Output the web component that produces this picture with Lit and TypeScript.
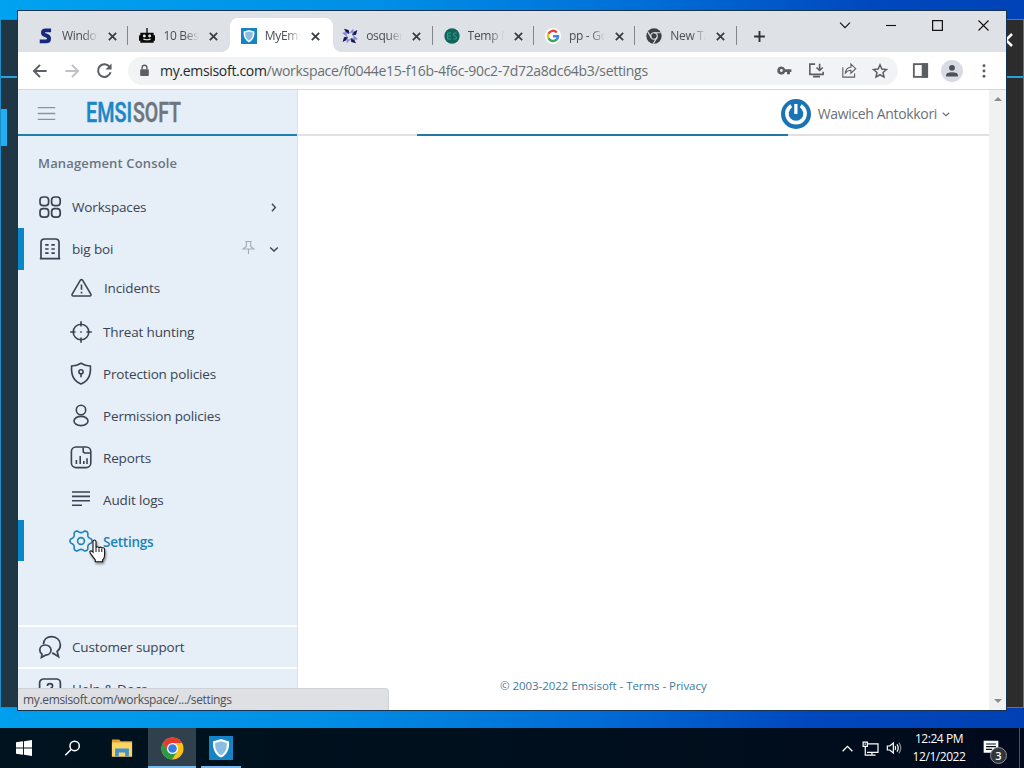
import { LitElement, html, svg, css } from "lit";
import { customElement, property } from "lit/decorators.js";

const gearOutline = () => {
  const pts: string[] = [];
  for (let d = 0; d < 360; d += 4) {
    const t = (d * Math.PI) / 180;
    const c = Math.cos(6 * t);
    const r = 9.7 + 1.35 * Math.sign(c) * Math.pow(Math.abs(c), 0.75);
    pts.push(`${(12 + r * Math.cos(t)).toFixed(2)} ${(12 + r * Math.sin(t)).toFixed(2)}`);
  }
  return `M${pts.join("L")}Z`;
};

const glyphs: Record<string, unknown> = {
  grid: svg`<rect x="2" y="2" width="8.6" height="8.6" rx="3.2"/><rect x="13.6" y="2" width="8.6" height="8.6" rx="3.2"/><rect x="2" y="13.6" width="8.6" height="8.6" rx="3.2"/><rect x="13.6" y="13.6" width="8.6" height="8.6" rx="3.2"/>`,
  building: svg`<path d="M3 21.6V5.6Q3 2 6.6 2h10.8Q21 2 21 5.6v16M1.8 21.7h20.4M7.2 7.8h3.4M13.4 7.8h3.4M7.2 12h3.4M13.4 12h3.4M7.2 16.2h3.4M13.4 16.2h3.4"/>`,
  warning: svg`<path d="M11.4 4.2Q12.500 2.7 13.6 4.2L21.800 18Q22.500 20 20.8 20H4.200Q2.500 20 3.200 18ZM12.500 8.6v5.2M12.500 15.8v1.6"/>`,
  target: svg`<circle cx="12" cy="12" r="7.8"/><path d="M12 1.2v5.4M12 17.4v5.4M1.2 12h5.4M17.4 12h5.4M11.2 12h1.6"/>`,
  shield: svg`<path d="M12 1.3Q16.5 4.1 21.4 4C22 12.500 20 19.1 12 21.9C4 19.1 2 12.500 2.6 4Q7.5 4.1 12 1.3Z"/><circle cx="12" cy="9.8" r="2.1"/><path d="M12 12v3.3"/>`,
  user: svg`<circle cx="12" cy="6" r="4.7"/><ellipse cx="12" cy="17" rx="7" ry="4.6"/>`,
  report: svg`<rect x="2.4" y="1" width="19.4" height="20.6" rx="4.6"/><path d="M14.2 1.400v3.6q0 2 2 2h5M7.4 14v4M11.2 10v8M14.8 15v3M18 12.2v5.8"/>`,
  lines: svg`<path d="M3 4h18M3 8.400h18M3 12.8h18M3 17.2h10"/>`,
  gear: svg`<path d=${gearOutline()} stroke-linejoin="round"/><circle cx="12" cy="12" r="3.4"/>`,
  chat: svg`<path d="M5.4 9.4C5.6 4.6 9 1.6 13.6 1.6c5 0 8.800 3.6 8.8 8.4c0 3-1.4 5-3.3 6.4l1.4 5.2l-5.5-3.4l-1 .1"/><path d="M7.2 10c-3.2 0-5.4 2.2-5.4 5c0 1.9.9 3.2 2.2 4.1l-.6 3.3l4.1-2.2c3.3 0 5.5-2.2 5.5-5.1c0-2.9-2.6-5.1-5.8-5.1Z"/>`,
  help: svg`<rect x="1.6" y="2" width="20.8" height="20" rx="4"/><path d="M9.4 9q0-2.4 2.6-2.4T14.6 9q0 1.6-2.6 3v2"/>`,
  right: svg`<path d="M9.5 6l5.5 6l-5.5 6"/>`,
  down: svg`<path d="M5.5 9.5l6.5 6l6.5-6"/>`,
  vee: svg`<path d="M3.500 8l8.500 8.500l8.500-8.500"/>`,
  pin: svg`<path d="M7 2.500h10M8.600 2.500v7.500L3.500 14.4h17L15.400 10V2.500M12 14.4V22.500"/>`,
  menu: svg`<path d="M2 5.2h20M2 12h20M2 18.8h20"/>`,
  x: svg`<path d="M4 4l16 16M20 4L4 20"/>`,
  plus: svg`<path d="M12 2v20M2 12h20"/>`,
  back: svg`<path d="M22 12H3.2M12 2.8L3 12l9 9.2"/>`,
  forward: svg`<path d="M2 12h18.8M12 2.8l9 9.2l-9 9.2"/>`,
  reload: svg`<path d="M20.6 14.6A9 9 0 1 1 19.4 7"/><path d="M22 2v8.6h-8.6Z" fill="currentColor" stroke="none"/>`,
  lock: svg`<rect x="4" y="9.6" width="16" height="12.4" rx="1.6" fill="currentColor" stroke="none"/><path d="M7.6 10V6.6a4.4 4.4 0 0 1 8.8 0V10"/>`,
  key: svg`<path fill="currentColor" stroke="none" fill-rule="evenodd" d="M7 5.5a6.5 6.5 0 1 0 6.1 8.7H16V18h4.8v-3.8H23V9.8H13.1A6.5 6.5 0 0 0 7 5.5ZM7 9.7a2.3 2.3 0 1 1 0 4.6a2.3 2.3 0 0 1 0-4.6Z"/>`,
  install: svg`<path d="M10 3H2.6v14.4h18.8v-3.6M7 20.6h10M16.4 2.4v8.6M12 7.8l4.4 4.2l4.4-4.2"/>`,
  share: svg`<path d="M4 7.4v14h16.6v-5M7.4 16.4c.5-5.8 3.4-8.8 8-9V3l6.8 6.4l-6.8 6.4V11.600c-3.600 0-6 1.400-8 4.800Z"/>`,
  star: svg`<path d="M12 2.700l2.800 6.300l6.900.700l-5.200 4.600l1.500 6.800L12 17.600l-6 3.500l1.500-6.800l-5.200-4.600l6.900-.700Z"/>`,
  panel: svg`<rect x="2.600" y="3" width="18.800" height="18"/><path d="M15 3h6.400v18H15Z" fill="currentColor"/>`,
  person: svg`<g fill="currentColor" stroke="none"><circle cx="12" cy="6.600" r="5"/><path d="M1.800 21.600v-2.400q0-5 10.200-5t10.200 5v2.400Z"/></g>`,
  dots: svg`<g fill="currentColor" stroke="none"><circle cx="12" cy="4" r="2.200"/><circle cx="12" cy="12" r="2.200"/><circle cx="12" cy="20" r="2.200"/></g>`,
  minimize: svg`<path d="M2 13h20"/>`,
  maximize: svg`<rect x="3" y="3" width="18" height="18"/>`,
  up: svg`<path d="M3 17l9-9l9 9"/>`,
  search: svg`<circle cx="15" cy="8.400" r="6.600"/><path d="M10.300 13.100L1.800 21.600"/>`,
  network: svg`<path d="M7 5.600h15.600v11.800H7M14 17.400v3.800M8.600 21.400h10.600M1.600 3h6v6h-6ZM4.600 9v12.400h4M3.600 5.800h2"/>`,
  sound: svg`<path d="M2 9v6h3.600l5.400 4.600V4.400L5.600 9Z"/><path d="M13.600 9q2 3 0 6M16.400 6.600q4 5.400 0 10.800"/><path d="M19.400 4q5.600 8 0 16" opacity=".5"/>`,
  s: svg`<path d="M19.600 3.600H11.500Q7.400 3.600 7.400 6.600Q7.400 9.400 10.500 10.600L13.500 11.800Q16.600 13 16.600 16Q16.600 20 12 20H2.600" stroke="#17297e" stroke-width="5.800"/>`,
  robot: svg`<g stroke="none"><path d="M11 0h2v7h-2ZM2 7h20v15H2ZM0 11h2v8H0ZM22 11h2v8h-2Z" fill="#0a0a0a"/><circle cx="8" cy="12" r="2.200" fill="#e7e9ec"/><circle cx="16" cy="12" r="2.200" fill="#e7e9ec"/></g><path d="M6.500 16.400q5.500 2.400 11 0" stroke="#e7e9ec" stroke-width="1.800"/>`,
  emsi: svg`<g stroke="none"><path d="M0 0h24v24H0Z" fill="#1584c5"/><path d="M12 3l8 2.400C20.600 13 18 18.500 12 21.600C6 18.500 3.400 13 4 5.400Z" fill="#fff"/><path d="M12 5.200l5.800 1.700C18.200 13 16 17 12 19.200C8 17 5.800 13 6.200 6.900Z" fill="#8bbce4"/></g>`,
  osq: svg`<g stroke="none"><path d="M11 7L6 7L3 1L10 3ZM17 11V6l6-3l-2 7ZM13 17h5l3 6l-7-2ZM7 13v5l-6 3l2-7Z" fill="#151a4e"/><path d="M11 7l6-6v6ZM17 11l7 6l-7 1ZM13 17l-6 6v-6ZM7 13L0 7l7-1Z" fill="#7f83e2"/><path d="M8 6l4 1.500L8.500 9ZM18 8l-1.500 4L15 8.500ZM16 18l-4-1.500l3.500-1.500ZM6 16l1.500-4L9 15.500Z" fill="#151a4e"/></g>`,
  temp: svg`<circle cx="12" cy="12" r="11.500" fill="#12635b" stroke="none"/><path d="M10.500 7.500H5.500v9h5M5.500 12h5M19 8q-5-2-5 1.500q0 2 2.500 2.500t2.500 2.500q0 3.500-5 1.500" stroke="#2fae8b" stroke-width="1.300"/>`,
  google: svg`<circle cx="12" cy="12" r="12" fill="#fff" stroke="none"/><g stroke-width="3.600"><path d="M17.700 6.700A7.600 7.600 0 0 0 5.200 8.600" stroke="#ea4335"/><path d="M5.200 8.600a7.600 7.600 0 0 0 0 6.800" stroke="#fbbc05"/><path d="M5.200 15.400a7.600 7.600 0 0 0 11.900 2.200" stroke="#34a853"/><path d="M17.100 17.600q2.500-2 2.500-5.200H12" stroke="#4285f4"/></g>`,
  mono: svg`<circle cx="12" cy="12" r="11.500" fill="#3c4043" stroke="none"/><circle cx="12" cy="12" r="4.900" stroke="#dee1e6" stroke-width="1.800"/><path d="M12 7.100H22M7.800 14.400L2.700 5.600M16.200 14.400L11 23.200" stroke="#dee1e6" stroke-width="1.800"/>`,
  chrome: svg`<g stroke="none"><circle cx="12" cy="12" r="11.500" fill="#fbc116"/><path d="M12 6.200h9.950A11.500 11.500 0 0 0 2 6.250L7 15Z" fill="#e33b2e"/><path d="M2 6.250A11.500 11.500 0 0 0 11.500 23.500L17 14.900L12 12L7 15Z" fill="#2a9a48"/><circle cx="12" cy="12" r="5.800" fill="#fff"/><circle cx="12" cy="12" r="4.500" fill="#397be6"/></g>`,
  windows: svg`<path d="M0 3.400L10.600 2V11.300H0ZM12 1.800L24 0V11.300H12ZM0 12.700H10.600V22L0 20.600ZM12 12.700H24V24L12 22.200Z" fill="#fff" stroke="none"/>`,
  folder: svg`<g stroke="none"><path d="M1 2.600h8l1.500 2H23v16.800H1Z" fill="#e2a22b"/><path d="M1 6h22v15.400H1Z" fill="#fbd667"/><path d="M4.500 12.600h15v8.800h-4v-4.600h-7v4.600h-4Z" fill="#4092cf"/></g>`,
  power: svg`<circle cx="12" cy="12" r="12" fill="#1a74b4" stroke="none"/><path d="M8.200 5.400A7.300 7.300 0 1 0 15.800 5.400" stroke="#fff" stroke-width="2.900"/><path d="M11.900 4v8" stroke="#fff" stroke-width="2.600"/>`,
  note: svg`<path d="M1 1h22v18h-6v4.500L12.500 19H1Z" fill="#fff" stroke="none"/><path d="M4.600 6h14.800M4.600 10h14.800M4.600 14h9" stroke="#00101c" stroke-width="1.700"/>`,
};

@customElement("ui-icon")
class UiIcon extends LitElement {
  @property() name = "";
  @property({ type: Number }) size = 24;
  @property({ type: Number }) weight = 1.5;
  static styles = css`
    :host { display: block; flex: none; line-height: 0; }
    svg { display: block; overflow: visible; }
  `;
  render() {
    return html`<svg width=${this.size} height=${this.size} viewBox="0 0 24 24" fill="none"
      stroke="currentColor" stroke-width=${(this.weight * 24) / this.size}>${glyphs[this.name]}</svg>`;
  }
}

const icon = (name: string, size: number, weight = 1.5) =>
  html`<ui-icon name=${name} .size=${size} .weight=${weight}></ui-icon>`;

@customElement("browser-chrome")
class BrowserChrome extends LitElement {
  static styles = css`
    :host { display: block; font-family: "Open Sans", "Noto Sans", sans-serif; }
    .strip { height: 41px; background: #dee1e6; display: flex; align-items: stretch; box-sizing: border-box; padding: 7px 0 0 9px; }
    .tab { width: 101.4px; flex: none; display: flex; align-items: center; box-sizing: border-box; padding: 2px 0 0 11px; color: #4b4f54; position: relative; }
    .tab.sep::after { content: ""; position: absolute; right: 0; top: 8px; width: 1px; height: 19px; background: #83878c; }
    .tab.on { background: #fff; border-radius: 8px 8px 0 0; width: 103px; margin-right: -1.600px; }
    .tab.on::before, .tab.on::after { content: ""; position: absolute; bottom: 0; width: 8px; height: 8px; }
    .tab.on::before { left: -8px; background: radial-gradient(circle at 0 0, transparent 7.500px, #fff 8px); }
    .tab.on::after { right: -8px; background: radial-gradient(circle at 100% 0, transparent 7.500px, #fff 8px); }
    .title { font-size: 12px; letter-spacing: -.3px; margin-left: 8px; width: 36px; overflow: hidden; white-space: nowrap; line-height: 18px;
      -webkit-mask-image: linear-gradient(90deg, #000 60%, transparent); mask-image: linear-gradient(90deg, #000 60%, transparent); }
    .close { margin-left: 9px; color: #3c4043; }
    .plus { margin: 12px 0 0 16px; color: #303438; }
    .controls { margin-left: auto; display: flex; height: 14px; color: #111; }
    .controls > span { width: 46px; display: grid; place-items: center; }
    .bar { height: 38px; background: #fff; border-bottom: 1px solid #d5d7da; box-sizing: border-box; display: flex; align-items: center; color: #5b5f63; padding-left: 14px; }
    .bar .fwd { color: #bfc1c4; margin: 0 16px; }
    .omni { width: 770px; height: 28px; margin-left: 15px; border-radius: 14px; background: #f1f3f4; display: flex; align-items: center; box-sizing: border-box; padding: 0 2px 0 10px; }
    .url { margin-left: 9px; font-size: 14px; color: #6b6f73; letter-spacing: -.31px; white-space: nowrap; }
    .url b { font-weight: 400; color: #25282b; }
    .tools { margin-left: auto; display: flex; align-items: center; }
    .cell { width: 32px; display: grid; place-items: center; }
    .right { display: flex; align-items: center; margin-left: 6px; }
    .avatar { width: 22px; height: 22px; border-radius: 50%; background: #d8dbe3; display: grid; place-items: center; color: #4b5059; }
  `;
  tabs = [
    ["s", "Windows"], ["robot", "10 Best"], ["emsi", "MyEmsisoft"], ["osq", "osquery"],
    ["temp", "Temp Mail"], ["google", "pp - Google"], ["mono", "New Tab"],
  ];
  cell = (c: unknown) => html`<span class="cell">${c}</span>`;
  render() {
    return html`
      <div class="strip">
        ${this.tabs.map(([ic, t], i) => html`
          <div class="tab ${i === 2 ? "on" : i === 1 ? "" : "sep"}">
            ${icon(ic, 16)}<span class="title">${t}</span><span class="close">${icon("x", 11, 1.8)}</span>
          </div>`)}
        <span class="plus">${icon("plus", 13, 1.9)}</span>
        <div class="controls">
          <span>${icon("vee", 14, 1.1)}</span><span>${icon("minimize", 12, 1.1)}</span><span>${icon("maximize", 13, 1.2)}</span><span>${icon("x", 15, 1.1)}</span>
        </div>
      </div>
      <div class="bar">
        ${icon("back", 16, 2)}<span class="fwd">${icon("forward", 16, 2)}</span>${icon("reload", 17, 2)}
        <div class="omni">
          ${icon("lock", 13, 1.4)}
          <span class="url"><b>my.emsisoft.com</b>/workspace/f0044e15-f16b-4f6c-90c2-7d72a8dc64b3/settings</span>
          <div class="tools">${[icon("key", 15), icon("install", 17, 1.6), icon("share", 17, 1.1), icon("star", 16, 1.5)].map(this.cell)}</div>
        </div>
        <div class="right">${[icon("panel", 17, 1.8), html`<span class="avatar">${icon("person", 14)}</span>`, icon("dots", 16)].map(this.cell)}</div>
      </div>`;
  }
}

@customElement("console-page")
class ConsolePage extends LitElement {
  static styles = css`
    :host { display: grid; grid-template-columns: 280px 1fr 17px; font-family: "Open Sans", "Noto Sans", sans-serif; color: #3a4453; }
    .side { background: #e6eef7; display: flex; flex-direction: column; overflow: hidden; box-sizing: border-box; border-right: 1px solid #dbe3ea; }
    .brand { height: 46px; box-sizing: border-box; border-bottom: 2px solid #1f7fae; display: flex; align-items: center; padding: 1px 0 0 18px; margin-right: -1px; flex: none; color: #8a939a; }
    .brand ui-icon { margin-top: 2px; }
    .logo { margin-left: 17px; display: block; }
    .logo text { font-family: Roboto, sans-serif; font-weight: 500; font-size: 28px; stroke-width: .5px; }
    .emsi { fill: #1b87c6; stroke: #1b87c6; }
    .soft { fill: #6f767b; stroke: #6f767b; }
    .heading { font-size: 13px; font-weight: 600; color: #6a7580; line-height: 20px; padding: 17px 0 13px 20px; flex: none; letter-spacing: .15px; }
    .row { height: 42px; flex: none; display: flex; align-items: center; box-sizing: border-box; padding: 0 16px 0 20px; font-size: 13.500px; letter-spacing: -.15px; white-space: nowrap; }
    .row .label { margin-left: 10px; }
    .row.top { border-left: 6px solid transparent; padding-left: 14px; }
    .row.on { border-left-color: #0b86c8; }
    .tail { margin-left: auto; display: flex; align-items: center; gap: 11px; }
    .tail .pin { color: #a3adb6; margin-top: -3px; }
    .sub { border-left: 6px solid transparent; padding-left: 45px; }
    .sub.first { height: 41px; padding-bottom: 5px; }
    .sub.first .label { margin-left: 11px; }
    .sub.on { color: #1b83ba; font-weight: 600; letter-spacing: -.25px; height: 41px; margin-top: -1px; }
    .sub.on .label { margin-top: 3px; }
    .foot { margin-top: auto; flex: none; height: 85px; overflow: hidden; }
    .foot .row { border-top: 2px solid #fbfdff; height: 42.500px; }
    .foot .docs { margin-top: -1px; }
    .main { display: flex; flex-direction: column; background: #fff; }
    .head { height: 44px; display: flex; align-items: center; justify-content: flex-end; padding: 3px 37px 0 0; box-sizing: border-box; color: #6b7076; font-size: 14px; }
    .who { margin: 0 3px 0 7px; letter-spacing: -.34px; }
    .track { height: 2px; background: #dfe1e3; padding-left: 119px; }
    .fill { height: 2px; background: #1f7ba6; }
    .legal { margin-top: auto; padding: 0 0 15px 202px; font-size: 11.500px; line-height: 18px; color: #3b7ca0; white-space: nowrap; letter-spacing: -.05px; }
    .scroll { background: #f1f1f1; display: flex; flex-direction: column; justify-content: space-between; align-items: center; padding: 7px 0 7px; box-sizing: border-box; }
    .tri { width: 0; height: 0; border: 4px solid transparent; border-top: 0; border-bottom: 4px solid #8c8c8c; }
    .tri.dn { border-top: 4px solid #8c8c8c; border-bottom: 0; }
  `;
  items = [
    ["warning", "Incidents"], ["target", "Threat hunting"], ["shield", "Protection policies"],
    ["user", "Permission policies"], ["report", "Reports"], ["lines", "Audit logs"], ["gear", "Settings"],
  ];
  render() {
    return html`
      <div class="side">
        <div class="brand">
          ${icon("menu", 21, 1.3)}
          <svg class="logo" width="130" height="30">
            <text class="emsi" x="12" y="24" textLength="46" lengthAdjust="spacingAndGlyphs">EMSI</text>
            <text class="soft" x="59" y="24" textLength="48" lengthAdjust="spacingAndGlyphs">SOFT</text>
          </svg>
        </div>
        <div class="heading">Management Console</div>
        <div class="row top">${icon("grid", 24, 1.7)}<span class="label">Workspaces</span><span class="tail">${icon("right", 15, 1.4)}</span></div>
        <div class="row top on">${icon("building", 24, 1.7)}<span class="label">big boi</span><span class="tail"><span class="pin">${icon("pin", 15, 1.1)}</span>${icon("down", 14, 1.5)}</span></div>
        ${this.items.map(([ic, label], i) => html`
          <div class="row sub ${i === 0 ? "first" : i === 6 ? "on" : ""}">${icon(ic, 24, 1.600)}<span class="label">${label}</span></div>`)}
        <div class="foot">
          <div class="row">${icon("chat", 24, 1.700)}<span class="label">Customer support</span></div>
          <div class="row docs">${icon("help", 24, 1.700)}<span class="label">Help &amp; Docs</span></div>
        </div>
      </div>
      <div class="main">
        <div class="head">${icon("power", 30)}<span class="who">Wawiceh Antokkori</span>${icon("down", 12, 1.200)}</div>
        <div class="track"><div class="fill" style="width:371px"></div></div>
        <div class="legal">© 2003-2022 Emsisoft - Terms - Privacy</div>
      </div>
      <div class="scroll"><i class="tri"></i><i class="tri dn"></i></div>`;
  }
}

@customElement("task-bar")
class TaskBar extends LitElement {
  static styles = css`
    :host { display: flex; align-items: stretch; background: linear-gradient(90deg, #00131f, #000f1d 60%, #000a1c); color: #fff; font-family: "Open Sans", "Noto Sans", sans-serif; }
    .slot { width: 48px; display: grid; place-items: center; box-sizing: border-box; border-bottom: 2px solid transparent; padding-top: 2px; }
    .slot.open { background: #30404d; border-color: #76b9ed; }
    .slot.app { width: 40px; margin: 0 5px; border-color: #76b9ed; }
    .slot.files { margin-left: 2px; margin-right: 2px; }
    .tray { margin-left: auto; display: flex; align-items: center; }
    .up { margin-right: 8px; }
    .net { margin-right: 7px; }
    .vol { margin-right: 6px; }
    .clock { width: 62px; text-align: center; font-size: 12px; line-height: 18px; letter-spacing: -.45px; margin-right: 13px; white-space: nowrap; }
    .note { position: relative; margin-right: 20px; }
    .count { position: absolute; left: 7px; top: 7px; width: 17px; height: 17px; border-radius: 50%; background: #30363c; border: 1px solid #8b9094; box-sizing: border-box; font-size: 11px; line-height: 15px; text-align: center; font-weight: 600; }
    .peek { width: 1px; align-self: stretch; background: #46525c; margin-right: 4px; }
  `;
  render() {
    return html`
      <span class="slot">${icon("windows", 16)}</span>
      <span class="slot">${icon("search", 17, 1.500)}</span>
      <span class="slot files">${icon("folder", 22)}</span>
      <span class="slot open">${icon("chrome", 23)}</span>
      <span class="slot app">${icon("emsi", 24)}</span>
      <div class="tray">
        <span class="up">${icon("up", 13, 1.300)}</span><span class="net">${icon("network", 17, 1.200)}</span><span class="vol">${icon("sound", 16, 1.200)}</span>
        <div class="clock">12:24 PM<br />12/1/2022</div>
        <div class="note">${icon("note", 16)}<span class="count">3</span></div>
        <i class="peek"></i>
      </div>`;
  }
}

@customElement("app-root")
class AppRoot extends LitElement {
  static styles = css`
    :host { display: flex; flex-direction: column; width: 1024px; height: 768px; overflow: hidden; font-family: "Open Sans", "Noto Sans", sans-serif; }
    .desk { height: 728px; position: relative; overflow: hidden; background: linear-gradient(95deg, #00a3f0 0, #008fe6 35%, #006dd6 60%, #0048be 80%, #0040b4 100%); }
    .behind { position: absolute; left: 0; top: 19px; width: 1024px; height: 689px; box-sizing: border-box; background: linear-gradient(90deg, #1f3744 50%, #2b2c2b 50%); border: 1px solid #1d8ec4; }
    .rule { position: absolute; left: 0; top: 56px; width: 100%; height: 2px; background: #2aa0de; }
    .mark { position: absolute; left: 0; top: 89px; width: 6px; height: 37px; background: #20aef5; }
    .edge { position: absolute; right: 8px; top: 11px; color: #fff; }
    .win { position: absolute; left: 18px; top: 11px; width: 988px; height: 699px; background: #fff; box-shadow: 0 0 0 1px #17334f; display: flex; flex-direction: column; }
    console-page { flex: 1; min-height: 0; }
    .status { position: absolute; left: 0; bottom: 0; width: 371px; height: 22px; box-sizing: border-box; background: #dee0e4; border-top: 1px solid #cfd2d6; border-right: 1px solid #cfd2d6; border-top-right-radius: 4px; font-size: 12px; line-height: 22px; padding-left: 5px; color: #4c5055; letter-spacing: -.34px; }
    .hand { position: absolute; left: 71px; top: 528px; filter: drop-shadow(1px 2px 1px rgba(0,0,0,.4)); }
    task-bar { height: 40px; }
  `;
  render() {
    return html`
      <div class="desk">
        <div class="behind"><div class="rule"></div><div class="mark"></div><span class="edge">${icon("x", 18, 2.500)}</span></div>
        <div class="win">
          <browser-chrome></browser-chrome>
          <console-page></console-page>
          <div class="status">my.emsisoft.com/workspace/.../settings</div>
          <svg class="hand" width="18" height="24" viewBox="0 0 18 24">
            <path d="M4 2.500Q4 1 5.400 1T7 2.500V9q0-1.300 1.400-1.300T10 9.200q0-1.100 1.400-1.100t1.400 1.500q0-.9 1.300-.9t1.500 1.600V16q0 3.200-2 5v1.700H6.300V21L1.400 14.400q-1.200-1.900 0-2.400T4 13.200Z" fill="#fff" stroke="#111" stroke-width="1.100"/>
            <path d="M7 9v4M10 9.500V13M12.800 10v3" stroke="#111" stroke-width="1"/>
          </svg>
        </div>
      </div>
      <task-bar></task-bar>`;
  }
}
